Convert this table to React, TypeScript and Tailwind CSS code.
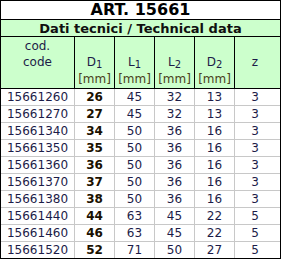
const ROWS: [string, string, string, string, string, string][] = [
  ["15661260", "26", "45", "32", "13", "3"],
  ["15661270", "27", "45", "32", "13", "3"],
  ["15661340", "34", "50", "36", "16", "3"],
  ["15661350", "35", "50", "36", "16", "3"],
  ["15661360", "36", "50", "36", "16", "3"],
  ["15661370", "37", "50", "36", "16", "3"],
  ["15661380", "38", "50", "36", "16", "3"],
  ["15661440", "44", "63", "45", "22", "5"],
  ["15661460", "46", "63", "45", "22", "5"],
  ["15661520", "52", "71", "50", "27", "5"],
];

const WIDTHS = ["w-[74px]", "w-[40px]", "w-[40px]", "w-[40px]", "w-[40px]", "w-[40px]"];

function Sym({ base, sub }: { base: string; sub: string }) {
  return (
    <span>
      {base}
      <span className="text-[10px] relative top-[2px]">{sub}</span>
    </span>
  );
}

function HeadCell({ base, sub }: { base: string; sub: string }) {
  return (
    <div className="w-[40px] flex flex-col justify-end items-center pb-[1px] border-r border-black leading-[16px]">
      <Sym base={base} sub={sub} />
      <span className="text-[#4a4020]">[mm]</span>
    </div>
  );
}

export default function App() {
  return (
    <div
      className="w-[281px] h-[259px] border border-black bg-white text-[12px] text-[#1c1c48]"
      style={{ fontFamily: '"DejaVu Sans", Verdana, sans-serif' }}
    >
      <div className="h-[19px] border-b border-black flex items-center justify-center font-bold text-[16px] text-black leading-none">
        ART. 15661
      </div>
      <div className="h-[17px] border-b border-black bg-[#ccffcc] flex items-center justify-center font-bold text-[13px] text-[#101010] leading-none">
        Dati tecnici / Technical data
      </div>
      <div className="h-[52px] border-b border-black bg-[#ccffcc] flex">
        <div className="w-[74px] flex flex-col items-center pt-[1px] border-r border-black leading-[16px]">
          <span>cod.</span>
          <span>code</span>
        </div>
        <HeadCell base="D" sub="1" />
        <HeadCell base="L" sub="1" />
        <HeadCell base="L" sub="2" />
        <HeadCell base="D" sub="2" />
        <div className="w-[40px] flex items-center justify-center pb-[1px]">z</div>
      </div>
      {ROWS.map((row, i) => (
        <div
          key={row[0]}
          className={`flex ${i < ROWS.length - 1 ? "h-[17px] border-b border-[#c8c8c8]" : "h-[16px]"}`}
        >
          {row.map((cell, j) => (
            <div
              key={j}
              className={`${WIDTHS[j]} flex items-center justify-center leading-none ${
                j < 5 ? "border-r border-[#c8c8c8]" : ""
              } ${j === 1 ? "font-bold text-[#1a1000]" : ""}`}
            >
              {cell}
            </div>
          ))}
        </div>
      ))}
    </div>
  );
}
